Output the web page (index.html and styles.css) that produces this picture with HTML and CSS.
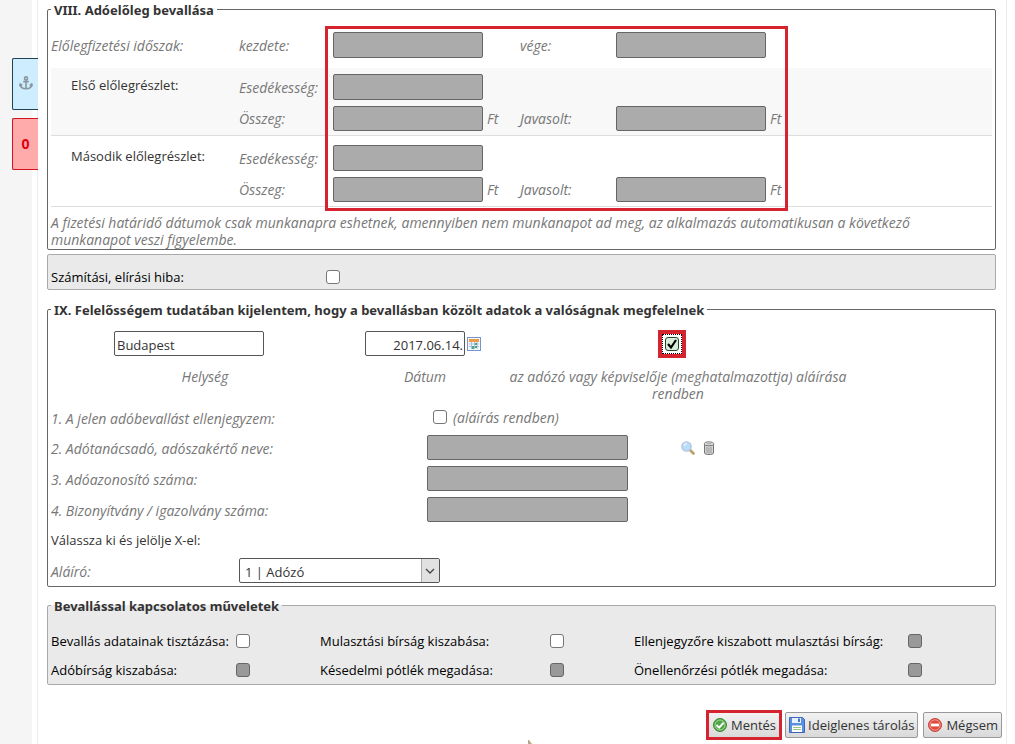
FILE: index.html
```html
<!DOCTYPE html>
<html lang="hu">
<head>
<meta charset="utf-8">
<title>Bevallás</title>
<link rel="stylesheet" href="styles.css">
</head>
<body>
<nav class="rail">
  <a class="tab tab-anchor" href="#top" aria-label="Horgony">
    <svg width="14" height="14" viewBox="0 0 14 14" fill="none" stroke="#8a979e" stroke-width="1.6"><circle cx="7" cy="2.4" r="1.5"/><path d="M7 4v9M4.2 5.6h5.6M1 8.2c.4 3 2.600 4.600 6 4.600s5.600-1.600 6-4.600M.5 10.200l.8-2.200 2 1.500M13.500 10.200l-.8-2.200-2 1.500"/></svg>
  </a>
  <a class="tab tab-errors" href="#errors">0</a>
</nav>
<main class="sheet" id="top">
  <form class="form">
    <fieldset class="panel">
      <legend>VIII. Adóelőleg bevallása</legend>
      <div class="advance">
        <div class="advance-row period">
          <span class="hint">Előlegfizetési időszak:</span>
          <label class="hint" for="from">kezdete:</label>
          <span class="amount"><input class="field tall" id="from" disabled></span>
          <label class="hint" for="to">vége:</label>
          <span class="amount"><input class="field tall" id="to" disabled></span>
        </div>
        <div class="instalment striped">
          <div class="advance-row">
            <span class="name">Első előlegrészlet:</span>
            <label class="hint" for="due1">Esedékesség:</label>
            <span class="amount"><input class="field tall" id="due1" disabled></span>
          </div>
          <div class="advance-row">
            <span></span>
            <label class="hint" for="sum1">Összeg:</label>
            <span class="amount"><input class="field" id="sum1" disabled><span class="hint">Ft</span></span>
            <label class="hint" for="sug1">Javasolt:</label>
            <span class="amount"><input class="field" id="sug1" disabled><span class="hint">Ft</span></span>
          </div>
        </div>
        <div class="instalment roomy">
          <div class="advance-row">
            <span class="name">Második előlegrészlet:</span>
            <label class="hint" for="due2">Esedékesség:</label>
            <span class="amount"><input class="field tall" id="due2" disabled></span>
          </div>
          <div class="advance-row">
            <span></span>
            <label class="hint" for="sum2">Összeg:</label>
            <span class="amount"><input class="field" id="sum2" disabled><span class="hint">Ft</span></span>
            <label class="hint" for="sug2">Javasolt:</label>
            <span class="amount"><input class="field" id="sug2" disabled><span class="hint">Ft</span></span>
          </div>
        </div>
        <div class="highlight"></div>
      </div>
      <p class="hint note">A fizetési határidő dátumok csak munkanapra eshetnek, amennyiben nem munkanapot ad meg, az alkalmazás automatikusan a következő munkanapot veszi figyelembe.</p>
    </fieldset>

    <div class="mistake" id="errors">
      <label for="mistake">Számítási, elírási hiba:</label>
      <input class="check" type="checkbox" id="mistake">
    </div>

    <fieldset class="panel declaration">
      <legend>IX. Felelősségem tudatában kijelentem, hogy a bevallásban közölt adatok a valóságnak megfelelnek</legend>
      <div class="signature">
        <div class="sign-cell place">
          <input class="field" id="place" value="Budapest">
        </div>
        <div class="sign-cell day">
          <input class="field date" id="date" value="2017.06.14.">
          <button class="icon-button" type="button" aria-label="Naptár">
            <svg width="14" height="14" viewBox="0 0 14 14"><rect x=".5" y=".5" width="13" height="13" fill="#f4f8fd" stroke="#7896cc"/><path d="M2 2h10v3H2z" fill="#ed9a4b"/><path d="M2 7h10M2 9.500h10M4.500 5v7M7.500 5v7M10 5v7" stroke="#a9bddf"/><path d="M8 6h2v2H8zM5 9h2v3H5zM8 9h2v2H8z" fill="#4ba487"/></svg>
          </button>
        </div>
        <div class="sign-cell accept">
          <span class="accept-frame"><input class="check" type="checkbox" id="accept" checked></span>
        </div>
        <label class="hint" for="place">Helység</label>
        <label class="hint" for="date">Dátum</label>
        <label class="hint" for="accept">az adózó vagy képviselője (meghatalmazottja) aláírása rendben</label>
      </div>
      <div class="line short">
        <span class="hint">1. A jelen adóbevallást ellenjegyzem:</span>
        <span class="countersign"><input class="check" type="checkbox" id="counter"><label class="hint" for="counter">(aláírás rendben)</label></span>
      </div>
      <div class="line">
        <label class="hint" for="advisor">2. Adótanácsadó, adószakértő neve:</label>
        <input class="field wide" id="advisor" disabled>
        <span class="tools">
          <button class="icon-button" type="button" aria-label="Keresés">
            <svg width="14" height="14" viewBox="0 0 14 14"><path d="M8.500 8.500l4 4" stroke="#b9a06a" stroke-width="2.600" stroke-linecap="round"/><circle cx="5.500" cy="5.500" r="4.600" fill="#b9dcf8" stroke="#b3c3e2" stroke-width="1.400"/><path d="M3 5a3 3 0 0 1 3-2.500" fill="none" stroke="#e6f4ff" stroke-width="1.400"/></svg>
          </button>
          <button class="icon-button" type="button" aria-label="Törlés">
            <svg width="12" height="14" viewBox="0 0 12 14"><path d="M1.500 3v9c0 2 9 2 9 0V3z" fill="#d2d2d2" stroke="#777"/><ellipse cx="6" cy="2.800" rx="4.800" ry="2" fill="#eee" stroke="#777"/><path d="M4 6v6M6 6.500v6M8 6v6" stroke="#9b9b9b"/><path d="M3.500 2.800h5" stroke="#999"/></svg>
          </button>
        </span>
      </div>
      <div class="line">
        <label class="hint" for="taxid">3. Adóazonosító száma:</label>
        <input class="field wide" id="taxid" disabled>
      </div>
      <div class="line">
        <label class="hint" for="cert">4. Bizonyítvány / igazolvány száma:</label>
        <input class="field wide" id="cert" disabled>
      </div>
      <div class="line short">
        <span>Válassza ki és jelölje X-el:</span>
      </div>
      <div class="line signer">
        <label class="hint" for="signer">Aláíró:</label>
        <span class="select"><select id="signer"><option>1 | Adózó</option></select><svg class="chevron" width="18" height="23" viewBox="0 0 18 23" fill="none"><path d="M0 0h18v23H0z" fill="#e1e1e1"/><path d="M.5 0v23" stroke="#aaa"/><path d="M5 10l4 4 4-4" stroke="#444" stroke-width="1.300"/></svg></span>
      </div>
    </fieldset>

    <fieldset class="panel actions">
      <legend>Bevallással kapcsolatos műveletek</legend>
      <div class="action-grid">
        <label for="a1">Bevallás adatainak tisztázása:</label><input class="check" type="checkbox" id="a1">
        <label for="a2">Mulasztási bírság kiszabása:</label><input class="check" type="checkbox" id="a2">
        <label for="a3">Ellenjegyzőre kiszabott mulasztási bírság:</label><input class="check" type="checkbox" id="a3" disabled>
        <label for="a4">Adóbírság kiszabása:</label><input class="check" type="checkbox" id="a4" disabled>
        <label for="a5">Késedelmi pótlék megadása:</label><input class="check" type="checkbox" id="a5" disabled>
        <label for="a6">Önellenőrzési pótlék megadása:</label><input class="check" type="checkbox" id="a6" disabled>
      </div>
    </fieldset>
  </form>
  <footer class="buttons">
    <button class="button marked" type="button">
      <svg width="16" height="16" viewBox="0 0 16 16"><circle cx="8" cy="8" r="6.500" fill="#4fa543" stroke="#3c8735"/><circle cx="8" cy="8" r="5" fill="none" stroke="#a6d99c"/><path d="M4.500 8l2.600 2.600 4.500-4.800" fill="none" stroke="#fff" stroke-width="2"/></svg>
      Mentés
    </button>
    <button class="button" type="button">
      <svg width="16" height="16" viewBox="0 0 16 16"><path d="M.5.5h13l2 2v13H.5z" fill="#5b8fe0" stroke="#3c66bd"/><path d="M3 1h9v5H3z" fill="#e8f1fc"/><path d="M9 1.500h2V5H9z" fill="#4577c9"/><path d="M3 8.500h10V15H3z" fill="#fff"/><path d="M4 10.500h8M4 12.500h8" stroke="#9fc47f"/></svg>
      Ideiglenes tárolás
    </button>
    <button class="button" type="button">
      <svg width="16" height="16" viewBox="0 0 16 16"><circle cx="8" cy="8" r="6.500" fill="#df4b3f" stroke="#c9453c"/><circle cx="8" cy="8" r="5.200" fill="none" stroke="#f19a90"/><path d="M4 6.600h8v2.800H4z" fill="#fff"/></svg>
      Mégsem
    </button>
  </footer>
  <svg class="grip" width="5" height="4" viewBox="0 0 5 4"><path d="M1 0h1l3 4H1z" fill="#b5a98c"/></svg>
</main>
</body>
</html>
```
FILE: styles.css
```css
* { box-sizing: border-box; }

body {
  display: flex;
  min-height: 100vh;
  margin: 0;
  background: #fff;
  color: #333;
  font-family: "Open Sans", "Noto Sans", sans-serif;
  font-size: 13px;
  line-height: 17px;
}

input, select, button { font: inherit; color: inherit; margin: 0; }

.rail {
  display: flex;
  flex: none;
  flex-direction: column;
  align-items: flex-end;
  gap: 8px;
  width: 37px;
  padding-top: 58px;
  background: linear-gradient(to right, #f5f5f5 32px, #fff 32px);
}

.tab {
  position: relative;
  z-index: 1;
  display: flex;
  align-items: center;
  justify-content: center;
  width: 26px;
  height: 52px;
  margin-right: -1px;
  padding-bottom: 2px;
  border: 1px solid;
  border-right: 0;
  border-radius: 2px 0 0 2px;
  font-size: 14px;
  font-weight: bold;
  text-decoration: none;
}
.tab-anchor { background: #ceeeff; border-color: #1c4550; }
.tab-errors { background: #ffabab; border-color: #d31222; color: #e00010; }

.sheet {
  position: relative;
  flex: 1;
  min-width: 0;
  margin-right: 8px;
  border: 1px solid #ececec;
  border-width: 0 1px;
}

.form { padding: 0 10px 0 9px; }

.panel {
  min-width: 0;
  margin: 0;
  padding: 0 3px;
  border: 1px solid #666;
  border-radius: 2px;
}
.panel legend {
  padding: 1px 3px 0;
  color: #333;
  font-family: "Noto Sans", "Open Sans", sans-serif;
  font-weight: bold;
  line-height: 18px;
}

.hint { color: #777; font-size: 14px; font-style: italic; }

.field {
  width: 150px;
  height: 25px;
  padding: 3px 2px 0;
  border: 1px solid #555;
  border-radius: 2px;
  background: #fff;
}
.field.tall { height: 26px; }
.field.wide { width: 201px; }
.field.date { width: 100px; padding-right: 1px; text-align: right; }
.field:disabled { background: #ababab; border-color: #666; }

.advance { position: relative; }
.advance-row {
  display: grid;
  grid-template-columns: 188px 94px 187px 96px 1fr;
  align-items: center;
}
.period { padding: 13px 0 10px; }
.instalment {
  display: grid;
  gap: 6px;
  padding: 6px 0 4px;
  border-bottom: 1px solid #ddd;
}
.striped { background: #f8f8f8; }
.roomy { padding-top: 9px; }
.name { padding: 0 0 4px 20px; }
.amount { display: flex; align-items: center; gap: 4px; }

.highlight {
  position: absolute;
  top: 7px;
  left: 274px;
  width: 463px;
  height: 185px;
  border: 3px solid #d5232f;
  pointer-events: none;
}

.note { margin: 0; padding: 7px 0 1px; }

.mistake {
  display: grid;
  grid-template-columns: 275px 1fr;
  align-items: center;
  margin: 4px 0 10px;
  padding: 12px 3px 2px;
  border: 1px solid #aaa;
  border-radius: 2px;
  background: #eaeaea;
  color: #000;
  line-height: 20px;
}

.check {
  appearance: none;
  flex: none;
  width: 14px;
  height: 14px;
  border: 1px solid #777;
  border-radius: 3px;
  background: #fff;
}
.check:disabled { background: #999; border-color: #666; }
.check:checked {
  border-color: #1f4a2a;
  background: #d9ecda url("data:image/svg+xml,%3Csvg xmlns='http://www.w3.org/2000/svg' viewBox='0 0 12 12'%3E%3Cpath d='M2 6l3 3.500L10 2' fill='none' stroke='%23000' stroke-width='2.200'/%3E%3C/svg%3E") center / 12px 12px no-repeat;
}

.signature {
  display: grid;
  grid-template-columns: 308px 132px 374px 1fr;
  row-gap: 12px;
  padding-top: 12px;
  text-align: center;
}
.signature label:last-child { grid-column: 3; }
.signature label:nth-last-child(3) { grid-column: 1; }
.sign-cell {
  display: flex;
  align-items: center;
  justify-content: center;
  gap: 2px;
  height: 25px;
}
.place { padding-right: 32px; }
.day { padding-right: 4px; }
.accept { padding-right: 12px; }
.accept-frame {
  display: flex;
  padding: 2px;
  border: 1px dotted #000;
  outline: 4px solid #d5232f;
}

.icon-button {
  display: flex;
  padding: 0;
  border: 0;
  background: none;
}

.line {
  display: grid;
  grid-template-columns: 376px 201px 1fr;
  align-items: center;
  height: 31px;
}
.line.short { height: 30px; }
.line > .hint { padding-top: 2px; }
.signer { grid-template-columns: 188px 1fr; }
.countersign { display: flex; align-items: center; gap: 6px; padding-left: 6px; white-space: nowrap; }
.tools { display: flex; gap: 8px; padding-left: 53px; }

.select { position: relative; width: 201px; height: 25px; }
.select select {
  appearance: none;
  width: 100%;
  height: 25px;
  padding: 3px 20px 0 5px;
  border: 1px solid #555;
  border-radius: 2px;
  background: #fff;
}
.chevron { position: absolute; top: 1px; right: 1px; pointer-events: none; }

.actions { margin-top: 9px; border-color: #aaa; background: #eaeaea; }
.action-grid {
  display: grid;
  grid-template-columns: 185px 84px 230px 84px 274px 1fr;
  grid-auto-rows: 29px;
  align-items: center;
  padding-top: 11px;
  color: #000;
}
.action-grid label { padding-top: 2px; white-space: nowrap; }

.buttons {
  display: flex;
  justify-content: flex-end;
  gap: 5px;
  padding: 27px 4px 0 0;
}
.button {
  display: flex;
  align-items: center;
  gap: 3px;
  height: 26px;
  padding: 0 3px;
  border: 1px solid #999;
  border-radius: 2px;
  background: linear-gradient(#f2f2f2, #d9d9d9);
}
.button.marked { border-color: #eee; border-radius: 0; outline: 3px solid #d5232f; outline-offset: -1px; }

.grip { position: absolute; bottom: 0; left: 489px; }
```
